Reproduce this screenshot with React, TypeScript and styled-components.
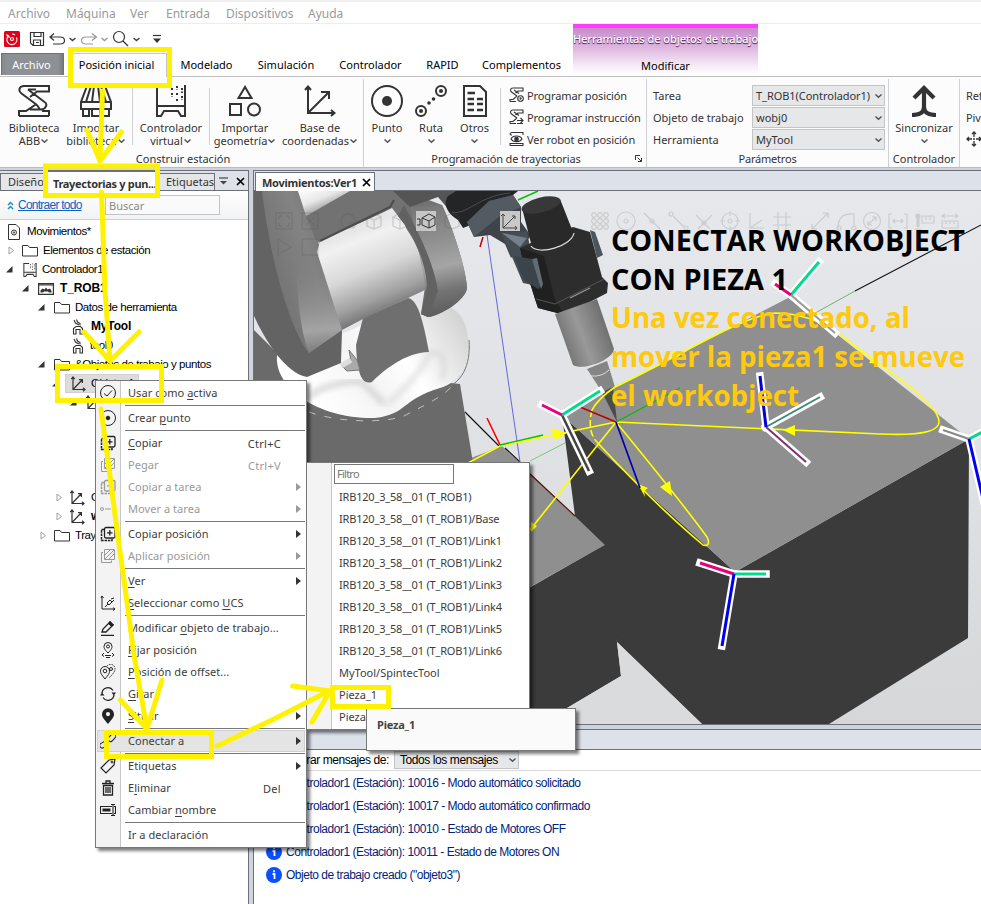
import React from "react";
import styled, { createGlobalStyle, css } from "styled-components";

const UI = `"Noto Sans", "Open Sans", sans-serif`;
const TREE = `"Liberation Sans", Arial, sans-serif`;
const INK = "#333";
const MARK = "#fff200";

const Global = createGlobalStyle`
  *, *::before, *::after { box-sizing: border-box; }
  body { margin: 0; background: #fff; }
  svg { display: block; flex: none; }
`;

/* ---------- window shell ---------- */

const Window = styled.div`
  position: relative;
  display: flex;
  flex-direction: column;
  width: 981px;
  height: 904px;
  overflow: hidden;
  background: #fff;
  color: ${INK};
  font: 11px/13px ${UI};
  white-space: nowrap;
`;

const HostMenu = styled.nav`
  display: flex;
  gap: 16px;
  height: 24px;
  padding: 4px 8px 0;
  border-top: 2px solid #f0f0f0;
  border-bottom: 1px solid #ededed;
  color: #999;
  font-size: 12px;
  line-height: 15px;
`;

const HostItem = styled.span<{ $w: number }>`
  width: ${(p) => p.$w}px;
`;

const TitleArea = styled.header`
  display: grid;
  grid-template-columns: 573px 185px 1fr;
  height: 53px;
  border-bottom: 1px solid #bfbfbf;
`;

const TitleLeft = styled.div`
  display: flex;
  flex-direction: column;
`;

const QuickBar = styled.div`
  display: flex;
  align-items: center;
  height: 29px;
  padding-left: 4px;
`;

const TabRow = styled.div`
  display: flex;
  height: 23px;
  padding-left: 1px;
`;

const Tab = styled.div<{ $kind?: "file" | "active"; $w: number }>`
  width: ${(p) => p.$w}px;
  height: 24px;
  padding-top: 5px;
  text-align: center;
  color: #000;
  ${(p) =>
    p.$kind === "file" &&
    css`
      height: 22px;
      margin-right: 4px;
      padding: 4px 2px 0 0;
      color: #fff;
      background: linear-gradient(90deg, #85888c, #8d9094 8%, #8d9094 92%, #75787c);
      border: 1px solid #6f7276;
      border-bottom: 0;
    `}
  ${(p) =>
    p.$kind === "active" &&
    css`
      padding: 4px 2px 0 0;
      background: #fcfcfc;
      border: 1px solid #c8c8c8;
      border-bottom: 0;
    `}
`;

const ContextTab = styled.div`
  display: flex;
  flex-direction: column;
  align-items: center;
  height: 51px;
  padding-top: 4px;
  border-top: 4px solid #ff3cff;
  background: linear-gradient(#c88bcb, #dcb4de 40%, #f5e8f5 78%, #fff);
  overflow: hidden;
`;

const ContextTitle = styled.div`
  color: #fff;
  font-size: 11px;
  font-weight: 500;
  letter-spacing: -0.05px;
  text-shadow: 0 1px 1px #6a2c70, 0 1px 0 #8a4c90;
`;

const ContextName = styled.div`
  margin-top: 14px;
  color: #000;
`;

/* ---------- ribbon ---------- */

const Ribbon = styled.section`
  display: flex;
  height: 91px;
  padding-top: 2px;
  background: #fcfcfc;
  border-bottom: 1px solid #b9bcc1;
`;

const Group = styled.div<{ $w: number }>`
  display: flex;
  flex-direction: column;
  flex: none;
  width: ${(p) => p.$w}px;
  border-right: 1px solid #cfd1d4;
`;

const GroupBody = styled.div`
  display: flex;
  height: 73px;
  padding-top: 6px;
`;

const GroupName = styled.div<{ $shift?: number; $ls?: number }>`
  position: relative;
  padding-left: ${(p) => p.$shift ?? 0}px;
  text-align: center;
  line-height: 14px;
  letter-spacing: ${(p) => p.$ls ?? 0}px;
`;

const Launcher = styled.span`
  position: absolute;
  right: 4px;
  top: 3px;
`;

const BigButton = styled.div<{ $w: number }>`
  display: flex;
  flex-direction: column;
  align-items: center;
  flex: none;
  width: ${(p) => p.$w}px;
  text-align: center;
`;

const BigLabel = styled.div`
  display: flex;
  align-items: center;
  height: 13px;
  &:first-of-type { margin-top: 4px; }
`;

const Divider = styled.i<{ $l: number; $r: number }>`
  flex: none;
  width: 1px;
  height: 57px;
  margin: 3px ${(p) => p.$r}px 0 ${(p) => p.$l}px;
  background: #cfd1d4;
`;

const RowStack = styled.div<{ $pad: number }>`
  display: flex;
  flex-direction: column;
  padding-left: ${(p) => p.$pad}px;
`;

const SmallButton = styled.div`
  display: flex;
  align-items: center;
  gap: 3px;
  height: 22px;
  padding-bottom: 2px;
  letter-spacing: -0.1px;
`;

const Param = styled.label`
  display: grid;
  grid-template-columns: 99px 133px;
  align-items: center;
  height: 22px;
  padding-bottom: 1px;
`;

const Combo = styled.span<{ $w?: number; $ls?: number }>`
  display: flex;
  align-items: center;
  justify-content: space-between;
  width: ${(p) => p.$w ?? 133}px;
  height: 21px;
  padding: 0 1px 0 3px;
  border: 1px solid #c3c4c6;
  background: #e6e7e9;
  letter-spacing: ${(p) => p.$ls ?? 0}px;
`;

/* ---------- dock area ---------- */

const Dock = styled.main`
  display: flex;
  flex: 1;
  min-height: 0;
  padding-top: 2px;
  background: #cfd4dd;
`;

const SidePanel = styled.aside`
  display: flex;
  flex-direction: column;
  width: 249px;
  border-top: 1px solid #6c7079;
  border-right: 1px solid #6c7079;
  background: #fff;
`;

const Strip = styled.div`
  display: flex;
  align-items: flex-end;
  height: 20px;
  background: #dde1e9;
  border-bottom: 1px solid #6c7079;
`;

const DockTab = styled.div<{ $w: number; $on?: boolean }>`
  width: ${(p) => p.$w}px;
  height: 17px;
  padding: 1px 0 0 7px;
  overflow: hidden;
  border: 1px solid #6c7079;
  border-width: 1px 1px 0;
  background: #e4e6ea;
  ${(p) =>
    p.$on &&
    css`
      height: 20px;
      margin-bottom: -1px;
      padding-top: 5px;
      background: #fff;
      font-weight: bold;
      letter-spacing: -0.32px;
    `}
`;

const StripTools = styled.div`
  display: flex;
  align-items: center;
  gap: 8px;
  height: 18px;
  padding-left: 4px;
`;

const TreeTools = styled.div`
  display: flex;
  align-items: center;
  height: 29px;
  padding-left: 7px;
  background: linear-gradient(#fff, #f1f2f3);
  border-bottom: 1px solid #cfcfcf;
  font: 12px/14px ${TREE};
`;

const CollapseLink = styled.a`
  width: 64px;
  margin: 0 23px 0 4px;
  color: #0b62c4;
  text-decoration: underline;
  letter-spacing: -0.75px;
`;

const Search = styled.div`
  width: 115px;
  height: 20px;
  padding: 3px 3px;
  border: 1px solid #c2c3c5;
  background: #fafafa;
  color: #888;
  font: 11px/13px ${UI};
`;

const Tree = styled.div`
  padding-top: 2px;
  font: 11.5px/19px ${TREE};
  letter-spacing: -0.44px;
  color: #000;
`;

const TreeRow = styled.div<{ $indent: number; $bold?: boolean; $gap?: number }>`
  display: flex;
  align-items: center;
  height: 19px;
  padding-left: ${(p) => p.$indent}px;
  margin-top: ${(p) => p.$gap ?? 0}px;
  ${(p) =>
    p.$bold &&
    css`
      font-weight: bold;
      font-size: 12px;
      letter-spacing: -0.15px;
    `}
`;

const Caret = styled.span`
  width: 8px;
`;

const Glyph = styled.span<{ $ml: number; $mr: number }>`
  margin: 0 ${(p) => p.$mr}px 0 ${(p) => p.$ml}px;
`;

const Picked = styled.span`
  display: flex;
  align-items: center;
  width: 74px;
  height: 19px;
  margin-left: 5px;
  padding-left: 4px;
  gap: 5px;
  background: #dcdcdc;
  border: 1px solid #d0d0d0;
`;

const Center = styled.div`
  display: flex;
  flex-direction: column;
  width: 728px;
  margin-left: 4px;
  border-top: 1px solid #6c7079;
  border-left: 1px solid #6c7079;
  background: #fff;
`;

const ViewTab = styled.div`
  display: flex;
  align-items: center;
  gap: 5px;
  width: 120px;
  height: 19px;
  margin: 0 0 -1px 1px;
  padding-left: 6px;
  border: 1px solid #6c7079;
  border-bottom: 0;
  background: #fdfdfd;
  font-weight: bold;
  letter-spacing: -0.27px;
  color: #333;
`;

const Viewport = styled.div`
  position: relative;
  height: 533px;
  overflow: hidden;
`;

const OutputHead = styled.div`
  height: 26px;
  border-top: 1px solid #6c7079;
  border-bottom: 1px solid #6c7079;
  background: linear-gradient(#cdd3dc 4px, #6c7079 4px, #6c7079 5px, #dce1ea 5px);
`;

const OutputFilter = styled.div`
  display: flex;
  align-items: center;
  height: 21px;
  padding-left: 28px;
  gap: 5px;
  border-bottom: 1px solid #dcdcdc;
  color: #000;
  font: 12px/14px ${TREE};
  letter-spacing: -0.42px;
`;

const FilterCombo = styled(Combo)`
  width: 125px;
  height: 18px;
  padding-left: 5px;
  letter-spacing: -0.42px;
`;

const LogRow = styled.div`
  display: flex;
  align-items: center;
  gap: 4px;
  height: 23px;
  padding-left: 12px;
  color: #00247a;
  font: 12px/14px ${TREE};
  letter-spacing: -0.48px;
`;

/* ---------- floating menus ---------- */

const Popup = styled.div<{ $x: number; $y: number; $w: number; $h: number }>`
  position: absolute;
  left: ${(p) => p.$x}px;
  top: ${(p) => p.$y}px;
  width: ${(p) => p.$w}px;
  height: ${(p) => p.$h}px;
  padding: 1px;
  border: 1px solid #77787a;
  background: linear-gradient(90deg, #f3f3f3 24px, #c6c6c6 24px, #c6c6c6 25px, #fff 25px);
  box-shadow: 3px 3px 3px rgba(0, 0, 0, 0.5);
  letter-spacing: 0.05px;
`;

const MenuRow = styled.div<{ $off?: boolean; $hot?: boolean }>`
  display: grid;
  grid-template-columns: 31px 1fr 36px 15px 8px;
  align-items: center;
  height: 22px;
  padding-right: 1px;
  color: ${(p) => (p.$off ? "#999" : "#3c3c3c")};
  ${(p) =>
    p.$hot &&
    css`
      background: #e4e4e4;
      box-shadow: inset 0 0 0 1px #cfcfcf;
    `}
  u { text-underline-offset: 2px; }
`;

const MenuIcon = styled.span`
  padding-left: 3px;
`;

const MenuText = styled.span`
  padding-bottom: 2px;
`;

const Shortcut = styled.span`
  text-align: right;
  letter-spacing: 0.3px;
`;

const Rule = styled.div`
  height: 1px;
  margin: 1px 0 1px 28px;
  background: #77787a;
`;

const Filter = styled.div`
  width: 120px;
  height: 20px;
  margin: 0 0 2px 26px;
  padding: 2px 2px;
  border: 1px solid #77787a;
  background: #fff;
  color: #777;
  letter-spacing: -0.75px;
`;

const SubRow = styled.div<{ $tight: boolean }>`
  height: 22px;
  padding: 4px 0 0 31px;
  color: #3c3c3c;
  letter-spacing: ${(p) => (p.$tight ? -0.19 : 0)}px;
`;

const Tip = styled.div`
  position: absolute;
  left: 366px;
  top: 708px;
  width: 210px;
  height: 43px;
  padding: 9px 10px;
  border: 1px solid #77787a;
  background: #fafafa;
  box-shadow: 3px 3px 3px rgba(0, 0, 0, 0.5);
  font-weight: bold;
  letter-spacing: -0.2px;
  color: #444;
`;

const Marks = styled.svg`
  position: absolute;
  left: 0;
  top: 0;
  pointer-events: none;
`;

/* ---------- icons ---------- */

type IconProps = { w: number; h?: number; vb?: string; c?: string; sw?: number; children: React.ReactNode };
const Icon = ({ w, h = w, vb, c = "#333", sw = 1, children }: IconProps) => (
  <svg width={w} height={h} viewBox={vb ?? `0 0 ${w} ${h}`} fill="none" stroke={c} strokeWidth={sw}>
    {children}
  </svg>
);

const Chevron = ({ c = "#555" }: { c?: string }) => (
  <Icon w={9} h={6} c={c} sw={1.5}><path d="M1.5 1.5 4.5 4.3 7.5 1.5" /></Icon>
);
const Cross = () => <Icon w={9} c="#000" sw={1.7}><path d="M1 1 8 8M8 1 1 8" /></Icon>;
const Menu3 = () => (
  <Icon w={9} h={8} c="#444" sw={1.2}><path d="M0 1H9" /><path d="M1 4H8L4.500 7.500Z" fill="#444" stroke="none" /></Icon>
);
const Axes = ({ s = 16 }: { s?: number }) => (
  <Icon w={s} vb="0 0 16 16" sw={1.2}>
    <path d="M3 1V13.5H15M3 13.5 12 4M1.3 3.2 3 1 4.7 3.2M13 11.8 15 13.5 13 15.2M9 3.6H12.4V7" />
  </Icon>
);
const Folder = () => <Icon w={16} h={13}><path d="M.5 12V1.5H6L7.5 3.5H15.5V12Z" /></Icon>;
const Open = () => <Icon w={7} c="none"><path d="M6.5 0V6.5H0Z" fill="#333" /></Icon>;
const Closed = () => <Icon w={7} h={9} c="#a0a0a0"><path d="M1 1 5.5 4.5 1 8Z" /></Icon>;
const Gripper = () => (
  <Icon w={12} h={16} sw={1.1}>
    <path d="M2 1 3.500 4 7 6M4.500.500 5.500 3 8 4.500V6.500M1.500 15V9.500L4 7.500H8.500L10.500 9.500V15H8V10.500H4V15Z" />
  </Icon>
);
const Cabinet = ({ s }: { s: number }) => (
  <Icon w={s} vb="0 0 32 32" sw={s > 20 ? 2 : 2.3}>
    <path d="M2 0V31H6L9 26H23L26 31H30V0M2 21H30" />
    <path d="M17 3V6M17 8V12M22 1V5M22 8V11M22 14V17M27 3V8M27 11V15" strokeDasharray="2 1.5" />
    {s < 20 && <path d="M2 1H14M28 1H30" />}
  </Icon>
);
const ArmIcon = () => (
  <Icon w={32} sw={2}>
    <path d="M6 1H31V6.500H19L12 12M6 1C1 1 0 6 3.500 8.500L19 20M10 4.500 26.500 17C30 19 28 25 22 24.500M19 20 22 24.500M1 31V26H8L18.500 19M31 31V26H24M1 31H31M10 4.500H18M12 24.500H22" />
  </Icon>
);
const LibraryIcon = () => (
  <Icon w={32} sw={2}>
    <path d="M7 1H25L31 17H1ZM11 1 6 17M14 1 12 17M18 1 20 17M21 1 26 17M1 17V24H31V17M3 24V31H9V25M11 31H21M12 25V31M20 25V31M23 25V31H29V24" />
  </Icon>
);
const ShapesIcon = () => (
  <Icon w={32} sw={2}><path d="M16 2 22.5 13H9.5ZM1 19H12V30H1Z" /><circle cx="25" cy="24.500" r="6" /></Icon>
);
const FrameIcon = () => (
  <Icon w={32} sw={2}><path d="M4 3V28H29M4 28 24 8M1 5 4 1.500 7 5M27 25 30.500 28 27 31M17 7H25V14" /></Icon>
);
const TargetIcon = () => (
  <Icon w={32} sw={2}><circle cx="16" cy="16" r="15" /><circle cx="16" cy="16" r="5" fill="#333" stroke="none" /></Icon>
);
const RouteIcon = () => (
  <Icon w={32} sw={2}>
    <circle cx="26" cy="6" r="5" /><circle cx="6" cy="26" r="5" />
    <g fill="#333" stroke="none">
      <circle cx="26" cy="6" r="2" /><circle cx="6" cy="26" r="2" />
      <circle cx="14" cy="18" r="1.800" /><circle cx="18.500" cy="14" r="1.800" />
    </g>
  </Icon>
);
const SheetIcon = () => (
  <Icon w={24} h={32} sw={2}>
    <path d="M1 1H17L23 7V31H1Z" />
    <path d="M4.500 8H12M4.500 14H11M4.500 19H11M4.500 25H11M14 14H20M14 19H20M14 25H20" strokeWidth="2.600" />
  </Icon>
);
const SyncIcon = () => (
  <Icon w={26} h={32} sw={4.200}>
    <path d="M13 2.500V22C13 28 8 30 1 30M13 22C13 28 18 30 25 30" />
    <path d="M3 13 13 3 23 13" />
  </Icon>
);
const MiniArm = ({ kind }: { kind: 0 | 1 | 2 }) => (
  <Icon w={15} h={16} sw={1.100}>
    {kind === 2 ? (
      <>
        <path d="M3 4C0 4 1 1.500 3 1.500H14V4M1 14.500V12.500H14V14.500H1M2 8C4 4 11 4 13 8 11 11.500 4 11.500 2 8Z" />
        <circle cx="7.500" cy="8" r="1.800" fill="#333" />
      </>
    ) : (
      <path d="M4 1H14V4H9L6.500 6M4 1C1 1 1 4 2.500 5L8 9M5 3 10 6.500M1 14.500V12.500H4L8 9M1 14.500H7" />
    )}
    {kind === 0 && <><circle cx="11.500" cy="11.500" r="2.800" /><circle cx="11.500" cy="11.500" r=".6" /></>}
    {kind === 1 && <path d="M8 11.500H14M11.500 9 14 11.500 11.500 14M8 14.500H14" />}
  </Icon>
);

const copyGlyph = (
  <>
    <rect x="4.500" y="1.500" width="10.500" height="10.500" rx="1.500" strokeWidth="1.300" />
    <path d="M9.800 4V9.500M7 6.800H12.500" strokeWidth="1.300" />
    <path d="M4 3.500H1.500V14.500H12V12" strokeWidth="1.500" strokeDasharray="2.500 .8" />
  </>
);

const menuIcons: Record<string, React.ReactNode> = {
  check: <><circle cx="8" cy="8" r="7.500" /><path d="M4 8.500 7 11 12 5.500" /></>,
  point: <><circle cx="8" cy="8" r="7.500" /><circle cx="8" cy="8" r="1.800" fill="#222" /></>,
  copy: copyGlyph,
  paste: <><path d="M4.500 1.500H14.500V11.500H4.500ZM3 4.500H1.500V14.500H11.500V12.500M5 7 10 2M5 11 14 2M9 11 14 6" /></>,
  move: <><circle cx="2" cy="8" r="1.500" /><path d="M5 8H11" /></>,
  ucs: <path d="M2 1V14H15M1 3 2 1 3.500 3M13 12.500 15 14 13 15.500M5 12 8 9M7 8 9 10 12 7 10 5ZM11 4 14 3M12 7 14 5" />,
  edit: <><path d="M1 15.500H14" strokeWidth="1.500" /><path d="M2 12 3 9 10 2 13 5 6 12Z" strokeWidth="1.300" /><path d="M10 1.500 13.500 5 11.500 6.500 8.500 3.500Z" fill="#222" /></>,
  pin: <><path d="M8 11C4 7 4 5.500 4 4.500A4 4 0 0 1 12 4.500C12 5.500 12 7 8 11ZM4 11 2 13 4 14.500M12 11 14 13 12 14.500M5 13.500H11M6 15.500H10" /><circle cx="8" cy="4.500" r="1.500" /></>,
  offset: <><path d="M5 15C1 10 .5 9 .5 7A4.500 4.500 0 0 1 9.500 7C9.500 9 9 10 5 15Z" /><circle cx="5" cy="7" r="1.800" /><path d="M7 2A4.500 4.500 0 0 1 15 5C15 8 12 11 9 14" strokeDasharray="1.500 1" /><circle cx="11" cy="5" r="1.500" /></>,
  rotate: <><path d="M2 7A6 6 0 0 1 13 4.500M14 9A6 6 0 0 1 3 11.500" strokeWidth="1.300" /><path d="M11.500 6.500H16L13.800 9.500ZM0 9.500 2 6.500 4.500 9.500Z" fill="#222" stroke="none" /></>,
  place: <path fillRule="evenodd" d="M8 16C3 10 2 8.500 2 6.200A6 6 0 0 1 14 6.200C14 8.500 13 10 8 16ZM8 4A2 2 0 1 0 8 8.200 2 2 0 1 0 8 4Z" fill="#222" stroke="none" />,
  link: <><rect x="7.500" y="2" width="9" height="5" rx="2.500" transform="rotate(-48 12 4.500)" /><rect x="-.5" y="9" width="9" height="5" rx="2.500" transform="rotate(-30 4 11.500)" /></>,
  tag: <><path d="M1 10 9 2 15 1 14 7 6 15Z" strokeWidth="1.200" /><circle cx="12" cy="4" r="1" /></>,
  trash: <path d="M2 3.500H14M6 3V1H10V3M3.500 5.500V15H12.500V5.500ZM6 7V13M8 7V13M10 7V13" strokeWidth="1.300" />,
  rename: <><path d="M12 4.500H.5V11.500H12M13 3V13M11 2.500H12.500L13 3 13.500 2.500H15M11 13.500H12.500L13 13 13.500 13.500H15M14 4.500H15.500V11.500H14" strokeWidth="1.100" /><path d="M2.500 8H10.500" strokeWidth="3" /></>,
};

/* ---------- data ---------- */

type Entry = { t?: React.ReactNode; i?: string; off?: boolean; sub?: boolean; key?: string; hot?: boolean };
const menu: Entry[] = [
  { t: <>Usar como <u>a</u>ctiva</>, i: "check" }, {},
  { t: <>Crear <u>p</u>unto</>, i: "point" }, {},
  { t: <><u>C</u>opiar</>, i: "copy", key: "Ctrl+C" },
  { t: "Pegar", i: "paste", key: "Ctrl+V", off: true },
  { t: "Copiar a tarea", i: "copy", sub: true, off: true },
  { t: "Mover a tarea", i: "move", sub: true, off: true }, {},
  { t: "Copiar posición", i: "copy", sub: true },
  { t: "Aplicar posición", i: "paste", sub: true, off: true }, {},
  { t: <><u>V</u>er</>, sub: true },
  { t: <><u>S</u>eleccionar como <u>U</u>CS</>, i: "ucs" }, {},
  { t: <>Modificar <u>o</u>bjeto de trabajo...</>, i: "edit" },
  { t: <><u>F</u>ijar posición</>, i: "pin" },
  { t: <><u>P</u>osición de offset...</>, i: "offset" },
  { t: <><u>G</u>irar</>, i: "rotate" },
  { t: <><u>S</u>ituar</>, i: "place", sub: true }, {},
  { t: "Conectar a", i: "link", sub: true, hot: true }, {},
  { t: "Etiquetas", i: "tag", sub: true },
  { t: <>E<u>l</u>iminar</>, i: "trash", key: "Del" },
  { t: <>Cambiar <u>n</u>ombre</>, i: "rename" }, {},
  { t: "Ir a declaración" },
];

const targets = [
  "IRB120_3_58__01 (T_ROB1)",
  "IRB120_3_58__01 (T_ROB1)/Base",
  ...[1, 2, 3, 4, 5, 6].map((n) => `IRB120_3_58__01 (T_ROB1)/Link${n}`),
  "MyTool/SpintecTool",
  "Pieza_1",
  "Pieza_2",
];

const log = [
  "Controlador1 (Estación): 10016 - Modo automático solicitado",
  "Controlador1 (Estación): 10017 - Modo automático confirmado",
  "Controlador1 (Estación): 10010 - Estado de Motores OFF",
  "Controlador1 (Estación): 10011 - Estado de Motores ON",
  'Objeto de trabajo creado ("objeto3")',
];

/* ---------- 3D scene ---------- */

type Axis = { to: [number, number]; c: string; w?: number };
const Triad = ({ at, axes }: { at: [number, number]; axes: Axis[] }) => (
  <g fill="none">
    {axes.map((a, i) => (
      <path key={i} d={`M${at}L${a.to}`} stroke="#fff" strokeWidth="7.500" strokeLinecap="square" />
    ))}
    {axes.map((a, i) => (
      <path key={i} d={`M${at}L${a.to}`} stroke={a.c} strokeWidth={a.w ?? 3} />
    ))}
  </g>
);

const Ghost = ({ x, y = 221, children }: { x: number; y?: number; children: React.ReactNode }) => (
  <g transform={`translate(${x} ${y})`}>{children}</g>
);

const Scene = () => (
  <svg width="727" height="533" viewBox="254 191 727 533">
    <defs>
      <linearGradient id="sky" x1="0" y1="0" x2="0" y2="1">
        <stop offset="0" stopColor="#e7e8eb" /><stop offset=".5" stopColor="#dfe1e4" /><stop offset="1" stopColor="#d6d7d9" />
      </linearGradient>
      <linearGradient id="link" gradientUnits="userSpaceOnUse" x1="256" y1="290" x2="345" y2="262">
        <stop offset="0" stopColor="#666" /><stop offset=".3" stopColor="#777" /><stop offset=".65" stopColor="#838383" /><stop offset="1" stopColor="#757575" />
      </linearGradient>
      <linearGradient id="linkLow" gradientUnits="userSpaceOnUse" x1="312" y1="250" x2="322" y2="350">
        <stop offset="0" stopColor="#777" stopOpacity="0" /><stop offset=".8" stopColor="#a4a4a4" /><stop offset="1" stopColor="#808080" />
      </linearGradient>
      <linearGradient id="drum" gradientUnits="userSpaceOnUse" x1="352" y1="225" x2="388" y2="315">
        <stop offset="0" stopColor="#e2e2e2" /><stop offset=".18" stopColor="#f1f1f1" /><stop offset=".5" stopColor="#d8d8d8" /><stop offset=".8" stopColor="#a0a0a0" /><stop offset="1" stopColor="#6c6c6c" />
      </linearGradient>
      <linearGradient id="elbow" gradientUnits="userSpaceOnUse" x1="430" y1="200" x2="452" y2="310">
        <stop offset="0" stopColor="#747474" /><stop offset=".35" stopColor="#8f8f8f" /><stop offset=".6" stopColor="#a5a5a5" /><stop offset=".82" stopColor="#737373" /><stop offset="1" stopColor="#606060" />
      </linearGradient>
      <linearGradient id="cap" gradientUnits="userSpaceOnUse" x1="320" y1="410" x2="460" y2="320">
        <stop offset="0" stopColor="#fff" /><stop offset=".35" stopColor="#f4f4f4" /><stop offset=".6" stopColor="#fff" /><stop offset="1" stopColor="#d4d4d4" />
      </linearGradient>
      <linearGradient id="white" gradientUnits="userSpaceOnUse" x1="310" y1="185" x2="322" y2="215">
        <stop offset="0" stopColor="#fff" /><stop offset=".5" stopColor="#e8e8e8" /><stop offset="1" stopColor="#888" />
      </linearGradient>
      <linearGradient id="pen" gradientUnits="userSpaceOnUse" x1="565" y1="345" x2="610" y2="328">
        <stop offset="0" stopColor="#777" /><stop offset=".4" stopColor="#999" /><stop offset="1" stopColor="#6c6c6c" />
      </linearGradient>
      <filter id="soft"><feGaussianBlur stdDeviation="3" /></filter>
    </defs>
    <rect x="254" y="191" width="727" height="533" fill="url(#sky)" />

    {/* workpieces */}
    <path d="M562 415 735 572 969 439 968 638 829 724H702L617 642 575 516Z" fill="#3b3b3b" />
    <path d="M604 545 617 642 621 676 540 724H400V662Z" fill="#3b3b3b" />
    <path d="M621 676 617 642 702 724H540Z" fill="#dadbdd" />
    <path d="M502 446 605 545 530 587 440 640V470Z" fill="#8f8f8f" />
    <path d="M790 297 969 439 735 572 562 415Z" fill="#8f8f8f" />
    <path d="M465 412 500 447M505 448 520 462" stroke="#111" strokeWidth="1.200" />
    <path d="M530 474 575 516" stroke="#5a1010" strokeWidth="1.200" />

    {/* robot arm */}
    <path d="M254 330 290 366 460 384 473 463H254Z" fill="#6a6a6a" />
    <path d="M277 355C274 388 318 419 375 418 408 414 400 400 440 388 462 382 471 358 468 340 467 322 460 312 450 307L420 300 300 352Z" fill="url(#cap)" />
    <path d="M308 398C320 385 352 380 362 382L384 404" stroke="#c6c6c6" strokeWidth="4" fill="none" filter="url(#soft)" />
    <path d="M388 404C400 392 420 376 430 352 440 350 448 360 442 380" stroke="#cfcfcf" strokeWidth="3" fill="none" filter="url(#soft)" />
    <path d="M309 412C340 423 385 423 404 416 430 402 455 393 463 368" stroke="#d5d5d5" strokeDasharray="7 9" fill="none" strokeWidth=".8" />
    <path d="M469 340C471 365 462 385 440 390" stroke="#777" fill="none" />
    <path d="M363 318 408 298C418 300 423 320 429 352 405 352 382 372 372 382 360 386 357 368 356 345Z" fill="#6f6f6f" />
    <path d="M254 191H298L320 248 342 330 341 363 307 377C286 374 265 340 254 316Z" fill="#636363" />
    <path d="M262 191H298L320 248 342 330 309 353C290 330 270 260 262 191Z" fill="url(#link)" />
    <path d="M300 250 320 248 342 330 309 353C300 330 298 300 296 270Z" fill="url(#linkLow)" />
    <path d="M298 191H352L306 216Z" fill="url(#white)" />
    <path d="M306 216 350 191H405L442 205C452 226 466 268 467 288 466 300 440 316 428 317L421 314 426 280 405 225 392 208 320 244 315 238Z" fill="#727272" />
    <path d="M320 241 380 214C398 211 414 236 421 258 427 275 428 283 427 289L408 298 363 319 342 330 317 252Z" fill="url(#drum)" />
    <path d="M410 207 442 205C452 226 466 268 467 288 466 300 440 316 428 317L421 314 429 303Z" fill="url(#elbow)" />
    <path d="M404 205C420 235 434 264 438 291L428 317 421 314 427 285C425 258 412 232 398 216Z" fill="#626262" />
    <path d="M320 241 390 207 394 200" stroke="#4c4c4c" strokeWidth="2" fill="none" />
    <path d="M349 350 357 360 360 370 347 371 341 365 351 361Z" fill="#aaa" stroke="#777" />
    <path d="M341 366 351 360" stroke="#ddd" strokeWidth="5" />
    <path d="M473 191H393L410 207 438 197 450 211 475 200Z" fill="#555" />

    {/* base and world lines */}
    <path d="M487 235 520 462" stroke="#6666e0" fill="none" />
    <path d="M518 200 538 191" stroke="#00c400" strokeWidth="1.500" />
    <path d="M483 237 480 247" stroke="#b00" strokeWidth="1.500" />

    {/* wrist */}
    <path d="M456 191H518L503 203 478 222 463 228 458 220C446 213 443 203 448 196Z" fill="#242526" />
    <path d="M452 212C466 216 478 196 510 193" stroke="#4a4c4e" fill="none" />
    <path d="M467 222 489 201 513 195 521 207 521 222 531 236 511 258 505 244 490 235 474 237Z" fill="#3e444a" />
    <path d="M467 222 489 201 513 195 521 207 500 216 474 237Z" fill="#535a61" />
    <path d="M501 233 527 231 531 253 542 287 523 283 512 257Z" fill="#454d54" />
    <path d="M502 233 527 238 520 247Z" fill="#76808a" />
    <path d="M590 230 595 232 603 255 597 258Z" fill="#4c555d" />

    {/* tool */}
    <path d="M520 248 533 242 573 227 590 232 602 277 608 283 607 293 565 315 538 308 535 299Z" fill="#2d2d2d" />
    <path d="M520 248 544 256 555 300 565 315 538 308 535 299 523 262Z" fill="#202020" />
    <path d="M514 256 532 259 542 285 538 289 524 280Z" fill="#3c444b" />
    <path d="M532 259 537 258 543 284 541 289Z" fill="#626c75" />
    <path d="M522 208 560 199 573 232C568 246 541 252 532 247Z" fill="#292929" />
    <ellipse cx="541" cy="205" rx="20" ry="7.500" transform="rotate(-14 541 205)" fill="#383838" />
    <path d="M531 246C538 256 572 246 574 233" stroke="#ddd" strokeWidth="1.200" fill="none" />
    <path d="M536 299 555 304 604 279" stroke="#555" strokeWidth="1" fill="none" />
    <path d="M570 298 590 288" stroke="#999" strokeWidth="1.200" fill="none" />
    <path d="M555 314 597 299 614 349C612 361 582 371 573 365Z" fill="url(#pen)" />
    <path d="M587 369 607 361 615 387 602 392Z" fill="#858585" />
    <path d="M591 376Q602 377 609 370" stroke="#ddd" fill="none" />
    <path d="M602 392 613 387 617 422Z" fill="#4b4b4b" />

    {/* trajectories */}
    <g fill="none" stroke="#ff0" strokeWidth="1.600">
      <path d="M468 463 500 446 616 422 880 434C925 436 946 431 937 415 927 395 875 362 847 340 825 318 790 313 775 313 740 317 690 351 615 387 602 396 596 402 592 410" />
      <path d="M592 410Q587 430 596 441" strokeDasharray="7 3" />
      <path d="M596 441C620 467 665 513 703 545 710 547 709 541 707 537Q680 500 616 422L530 530" />
    </g>
    <g fill="#ff0">
      <path d="M567 433 551 428 555 440ZM783 430 795 425V436ZM672 496 660 487 670 481ZM638 484 648 488 644 491 645 497ZM687 351 671 352 676 358ZM869 363 876 352 879 364ZM531 532V522L537 526Z" />
    </g>
    <path d="M487 418 500 445" stroke="#f00" strokeWidth="1.600" />
    <path d="M500 445 543 435M616 422 680 388" stroke="#00c000" strokeWidth="1.400" />
    <path d="M530 461 565 443" stroke="#7c7" />
    <path d="M580 407 616 422" stroke="#c00000" strokeWidth="1.500" />
    <path d="M616 422 640 488" stroke="#0000b0" strokeWidth="1.700" />
    <path d="M855 291 981 225" stroke="#111" strokeWidth="1.100" />
    <path d="M817 312 855 291" stroke="#6fb36f" />
    <Triad at={[562, 415]} axes={[{ to: [589, 471], c: "#444" , w: 2.5 }, { to: [600, 391], c: "#00dc8c" }, { to: [542, 405], c: "#e6007e" }]} />
    <Triad at={[791, 295]} axes={[{ to: [835, 333], c: "#999", w: 2 }, { to: [819, 262], c: "#00dc8c" }, { to: [775, 284], c: "#e6007e" }]} />
    <Triad at={[766, 427]} axes={[{ to: [820, 397], c: "#3a8a78", w: 2 }, { to: [806, 462], c: "#803070", w: 2 }, { to: [760, 376], c: "#0000d0" }]} />
    <Triad at={[734, 574]} axes={[{ to: [700, 563], c: "#e6007e" }, { to: [766, 574], c: "#00dc8c" }, { to: [722, 646], c: "#0000f0" }]} />
    <Triad at={[969, 439]} axes={[{ to: [943, 430], c: "#888", w: 2 }, { to: [990, 428], c: "#00dc8c" }, { to: [984, 503], c: "#0000f0" }]} />

    {/* faded view toolbar */}
    <g fill="none" stroke="#555" strokeWidth="1.300" opacity=".22">
      <Ghost x={284}><path d="M-8-8H8V8H-8ZM-5-2V-5H-2M2-5H5V-2M5 2V5H2M-2 5H-5V2" /></Ghost>
      <Ghost x={310}><path d="M-8-8H8V8H-8ZM-4-4 4 4M4-4-4 4" /></Ghost>
      <Ghost x={348}><circle r="7" /><circle cx="4" cy="4" r="3" /></Ghost>
      <Ghost x={374}><path d="M-7-4 0-8 7-4V5L0 8-7 5ZM-7-4 0-1 7-4M0-1V8" /></Ghost>
      <Ghost x={400}><path d="M-7-4 0-8 7-4V5L0 8-7 5ZM-7-4 0-1 7-4M0-1V8" /></Ghost>
      <Ghost x={452}><path d="M-7-4 0-8 7-4V5L0 8-7 5Z" /></Ghost>
      <Ghost x={284} y={247}><path d="M-6-8 7 0-6 8Z" /></Ghost>
      <Ghost x={310} y={247}><path d="M-8-8H8V8H-8Z" /></Ghost>
    </g>
    <g fill="none" stroke="#777" strokeWidth="1.200" opacity=".24">
      <Ghost x={600}>{[-6, 0, 6].map((a) => [-6, 0, 6].map((b) => <circle key={`${a}${b}`} cx={a} cy={b} r="2.300" />))}</Ghost>
      <Ghost x={626}><circle r="9" /><circle r="2" /></Ghost>
      <Ghost x={652}><path d="M-8-8 8 8" /><circle r="2" /></Ghost>
      <Ghost x={678}><circle cx="-7" cy="-7" r="2" /><path d="M-5-5 6 6" /><circle cx="8" cy="7" r="2" /></Ghost>
      <Ghost x={704}><path d="M-8-6 0 2 8-6M0 2-6 8M0 2 6 8" /><circle r="2" cy="2" /></Ghost>
      <Ghost x={730}><circle r="8" /><circle r="2" /><path d="M0-10V-5M0 5V10M-10 0H-5M5 0H10" /></Ghost>
      <Ghost x={756}><path d="M-6-8V7H8M-6 7 6-1" /></Ghost>
      <Ghost x={782}><path d="M-4-9V9M4-9V9M-9-4H9M-9 4H9" /></Ghost>
      <Ghost x={820}><path d="M-8 8 8-8M-8 3V8H-3M3-8H8V-3" /></Ghost>
      <Ghost x={846}><path d="M-8 7C-8-4-2-8 8-7V6" /><circle cx="-7" cy="7" r="2" /><circle cx="8" cy="7" r="2" /></Ghost>
      <Ghost x={872}><circle r="8.500" /><path d="M-4 4 4-4M0-4H4V0M-4 0V4H0" /></Ghost>
      <Ghost x={898}><path d="M-6-7H-9V7H-6M6-7H9V7H6M-5 0H5M-3-2-5 0-3 2M3-2 5 0 3 2" /></Ghost>
      <Ghost x={924}><path d="M-2-5H10V2H-2ZM2-5V-1M6-5V-1M-9 8H-3" /><circle cx="-6" cy="-5" r="2" fill="#777" /><path d="M-6-4V6" strokeWidth="3" /></Ghost>
      <Ghost x={950}><path d="M-8 0H8V7H-8ZM-4 0V3M0 0V3M4 0V3M-8-5H8M-5-7-8-5-5-3M5-7 8-5 5-3" /></Ghost>
    </g>
    <rect x="416" y="211" width="20" height="20" fill="#c6c6c6" />
    <path d="M422 218 429 214 435 217V225L429 228 422 225ZM422 218 429 221 435 217M429 221V228M417 219H420V225H417" stroke="#333" fill="none" />
    <rect x="500" y="211" width="20" height="20" fill="#c8c8c8" />
    <path d="M503 214V228H517M503 228 515 216M501 216 503 214 505 216M515 226 517 228 515 230M512 216H515V219" stroke="#444" fill="none" />
  </svg>
);

/* ---------- annotations ---------- */

const Annotations = () => (
  <Marks width="981" height="904" viewBox="0 0 981 904" fill="none">
    <g stroke={MARK} strokeWidth="5">
      <rect x="70.500" y="49.500" width="99" height="36" />
      <rect x="45.500" y="166" width="112" height="29.500" />
      <rect x="57.500" y="366.500" width="104" height="34" />
      <rect x="106.500" y="732.500" width="105" height="24" />
      <rect x="332.500" y="687.500" width="56" height="19" />
    </g>
    <g stroke={MARK} strokeWidth="5" strokeLinecap="round" strokeLinejoin="round">
      <path d="M102.500 91 100 161M87 130 100 161 121.500 132" />
      <path d="M101.500 192 105 290 110 361M84 332 110 361 139 332" />
      <path d="M101 409 109 468 117 530 127 602 134 655 147 729M120.500 700 147 729 162 680" />
      <path d="M217 746 270 721 329 691M292.500 686 330 691 312 722" />
    </g>
    <g fontFamily="Open Sans, Noto Sans, sans-serif" fontWeight="bold" fontSize="28.500">
      <g fill="#000">
        <text x="611" y="250.500" textLength="354" lengthAdjust="spacingAndGlyphs">CONECTAR WORKOBJECT</text>
        <text x="611" y="289.500" textLength="177" lengthAdjust="spacingAndGlyphs">CON PIEZA 1</text>
      </g>
      <g fill="#ffc90e">
        <text x="611" y="328" textLength="299" lengthAdjust="spacingAndGlyphs">Una vez conectado, al</text>
        <text x="611" y="367" textLength="354" lengthAdjust="spacingAndGlyphs">mover la pieza1 se mueve</text>
        <text x="611" y="406" textLength="188" lengthAdjust="spacingAndGlyphs">el workobject</text>
      </g>
    </g>
  </Marks>
);

const Big = ({ w, icon, a, b }: { w: number; icon: React.ReactNode; a: string; b?: string }) => (
  <BigButton $w={w}>
    {icon}
    <BigLabel>{a}</BigLabel>
    <BigLabel>{b}<Chevron /></BigLabel>
  </BigButton>
);

export default function App() {
  return (
    <Window>
      <Global />
      <HostMenu>
        <HostItem $w={42}>Archivo</HostItem>
        <HostItem $w={48}>Máquina</HostItem>
        <HostItem $w={20}>Ver</HostItem>
        <HostItem $w={44}>Entrada</HostItem>
        <HostItem $w={66}>Dispositivos</HostItem>
        <HostItem $w={36}>Ayuda</HostItem>
      </HostMenu>

      <TitleArea>
        <TitleLeft>
          <QuickBar>
            <svg width="158" height="20" viewBox="4 28 158 20" fill="none" stroke="#333" strokeWidth="1.200">
              <rect x="4" y="30" width="16" height="16" rx="1.500" fill="#e2001a" stroke="none" />
              <g stroke="#fff"><circle cx="12" cy="38" r="1.500" /><path d="M9 34.500A5 5 0 1 0 16.500 36.500M12 33A5 5 0 0 1 15 34M6.500 33.500 9.500 36.500" /></g>
              <path d="M30.500 31.500H43.500V44.500H33L30.500 42ZM34 32V35.500H41V32M33.500 44V39H40.500V44M36 41.500H39" />
              <path d="M54 32.500 50 36 54 39.500M50 36H60C66 36 66 43 60 43H53" />
              <path d="M92 32.500 96.500 36 92 39.500M96 36H86C80 36 80 43 86 43H93" stroke="#999" />
              <circle cx="119" cy="36" r="5.500" /><path d="M123 40 128 45" />
              <path d="M69.500 37 72.500 39.500 75.500 37M133.500 37 136.500 39.500 139.500 37" strokeWidth="1.500" stroke="#444" />
              <path d="M101.500 37 104.500 39.500 107.500 37" strokeWidth="1.500" stroke="#999" />
              <path d="M153 34.500H161" /><path d="M153 37.500H161L157 42Z" fill="#333" stroke="none" />
            </svg>
          </QuickBar>
          <TabRow>
            <Tab $kind="file" $w={63}>Archivo</Tab>
            <Tab $kind="active" $w={99}>Posición inicial</Tab>
            <Tab $w={79}>Modelado</Tab>
            <Tab $w={80}>Simulación</Tab>
            <Tab $w={89}>Controlador</Tab>
            <Tab $w={55}>RAPID</Tab>
            <Tab $w={103}>Complementos</Tab>
          </TabRow>
        </TitleLeft>
        <ContextTab>
          <ContextTitle>Herramientas de objetos de trabajo</ContextTitle>
          <ContextName>Modificar</ContextName>
        </ContextTab>
      </TitleArea>

      <Ribbon>
        <Group $w={364}>
          <GroupBody>
            <Big w={68} icon={<ArmIcon />} a="Biblioteca" b="ABB" />
            <Big w={56} icon={<LibraryIcon />} a="Importar" b="biblioteca" />
            <Divider $l={8} $r={4} />
            <Big w={68} icon={<Cabinet s={32} />} a="Controlador" b="virtual" />
            <Divider $l={4} $r={3} />
            <Big w={64} icon={<ShapesIcon />} a="Importar" b="geometría" />
            <Big w={86} icon={<FrameIcon />} a="Base de" b="coordenadas" />
          </GroupBody>
          <GroupName $shift={3}>Construir estación</GroupName>
        </Group>
        <Group $w={283}>
          <GroupBody>
            <Big w={46} icon={<TargetIcon />} a="Punto" />
            <Big w={42} icon={<RouteIcon />} a="Ruta" />
            <Big w={45} icon={<SheetIcon />} a="Otros" />
            <Divider $l={3} $r={3} />
            <RowStack $pad={5}>
              <SmallButton><MiniArm kind={0} />Programar posición</SmallButton>
              <SmallButton><MiniArm kind={1} />Programar instrucción</SmallButton>
              <SmallButton><MiniArm kind={2} />Ver robot en posición</SmallButton>
            </RowStack>
          </GroupBody>
          <GroupName $shift={2} $ls={-0.12}>
            Programación de trayectorias
            <Launcher><Icon w={7}><path d="M.5 5V.5H5M2.500 2.500 6 6M6.500 3V6.500H3" /></Icon></Launcher>
          </GroupName>
        </Group>
        <Group $w={242}>
          <GroupBody>
            <RowStack $pad={6}>
              <Param>Tarea<Combo $ls={-0.05}>T_ROB1(Controlador1)<Chevron /></Combo></Param>
              <Param>Objeto de trabajo<Combo>wobj0<Chevron /></Combo></Param>
              <Param>Herramienta<Combo>MyTool<Chevron /></Combo></Param>
            </RowStack>
          </GroupBody>
          <GroupName $ls={-0.2}>Parámetros</GroupName>
        </Group>
        <Group $w={71}>
          <GroupBody><Big w={70} icon={<SyncIcon />} a="Sincronizar" /></GroupBody>
          <GroupName>Controlador</GroupName>
        </Group>
        <RowStack $pad={6}>
          <GroupBody>
            <RowStack $pad={0}>
              <SmallButton>Referencia</SmallButton>
              <SmallButton>Pivote</SmallButton>
              <SmallButton>
                <Icon w={16} sw={1.300}><path d="M8 1V6M8 10V15M1 8H6M10 8H15M6 3 8 1 10 3M6 13 8 15 10 13M3 6 1 8 3 10M13 6 15 8 13 10M7 8H9" /></Icon>
              </SmallButton>
            </RowStack>
          </GroupBody>
        </RowStack>
      </Ribbon>

      <Dock>
        <SidePanel>
          <Strip>
            <DockTab $w={45}>Diseño</DockTab>
            <DockTab $w={113} $on>Trayectorias y pun...</DockTab>
            <DockTab $w={57}>Etiquetas</DockTab>
            <StripTools><Menu3 /><Cross /></StripTools>
          </Strip>
          <TreeTools>
            <Icon w={7} h={9} c="#1d86c8" sw={1.400}><path d="M1 4 3.500 1.500 6 4M1 8 3.500 5.500 6 8" /></Icon>
            <CollapseLink>Contraer todo</CollapseLink>
            <Search>Buscar</Search>
          </TreeTools>
          <Tree>
            <TreeRow $indent={8}>
              <Icon w={12} h={16}><path d="M.5.500H8L11.500 4V15.500H.5Z" /><circle cx="6" cy="8.500" r="2.500" /><circle cx="6" cy="8.500" r=".7" /></Icon>
              <Glyph $ml={0} $mr={7} />Movimientos*
            </TreeRow>
            <TreeRow $indent={8}><Caret><Closed /></Caret><Glyph $ml={6} $mr={5}><Folder /></Glyph>Elementos de estación</TreeRow>
            <TreeRow $indent={6}><Caret><Open /></Caret><Glyph $ml={9} $mr={5}><Cabinet s={14} /></Glyph>Controlador1</TreeRow>
            <TreeRow $indent={22} $bold><Caret><Open /></Caret>
              <Glyph $ml={8} $mr={6}><Icon w={16} h={12} sw={1.200}><path d="M.6.600H15.400V11.400H.6ZM0 2H16" /><path d="M2.500 9.500V7.500L4.500 5.500 6.500 6.500 8 4.500 9.500 6.500 12 5.500 13.500 8V9.500H11L10 8.500H6L5 9.500Z" fill="#333" stroke="none" /></Icon></Glyph>T_ROB1
            </TreeRow>
            <TreeRow $indent={38}><Caret><Open /></Caret><Glyph $ml={8} $mr={5}><Folder /></Glyph>Datos de herramienta</TreeRow>
            <TreeRow $indent={72} $bold><Gripper /><Glyph $ml={0} $mr={7} />MyTool</TreeRow>
            <TreeRow $indent={72}><Gripper /><Glyph $ml={0} $mr={6} />tool0</TreeRow>
            <TreeRow $indent={38}><Caret><Open /></Caret><Glyph $ml={8} $mr={5}><Folder /></Glyph>&amp;Objetos de trabajo y puntos</TreeRow>
            <TreeRow $indent={52}><Caret><Open /></Caret><Picked><Axes />Objeto_1</Picked></TreeRow>
            <TreeRow $indent={70}><Caret><Open /></Caret><Glyph $ml={7} $mr={5}><Axes /></Glyph></TreeRow>
            <TreeRow $indent={56} $gap={76}><Caret><Closed /></Caret><Glyph $ml={5} $mr={6}><Axes /></Glyph>Objeto_2</TreeRow>
            <TreeRow $indent={56} $bold><Caret><Closed /></Caret><Glyph $ml={5} $mr={6}><Axes /></Glyph>wobj0</TreeRow>
            <TreeRow $indent={40}><Caret><Closed /></Caret><Glyph $ml={6} $mr={5}><Folder /></Glyph>Trayectorias</TreeRow>
          </Tree>
        </SidePanel>

        <Center>
          <Strip><ViewTab>Movimientos:Ver1<Cross /></ViewTab></Strip>
          <Viewport><Scene /></Viewport>
          <OutputHead />
          <OutputFilter>Mostrar mensajes de:<FilterCombo>Todos los mensajes<Chevron /></FilterCombo></OutputFilter>
          {log.map((t) => (
            <LogRow key={t}>
              <svg width="16" height="16" viewBox="0 0 16 16">
                <circle cx="8" cy="8" r="8" fill="#0a50ff" />
                <path d="M8 3.200V5.200M6.500 7H8.500V12" stroke="#fff" strokeWidth="1.800" fill="none" />
              </svg>
              {t}
            </LogRow>
          ))}
        </Center>
      </Dock>

      <Popup $x={95} $y={380} $w={212} $h={468}>
        {menu.map((m, k) =>
          m.t ? (
            <MenuRow key={k} $off={m.off} $hot={m.hot}>
              <MenuIcon>{m.i && <Icon w={16} c={m.off ? "#999" : "#222"}>{menuIcons[m.i]}</Icon>}</MenuIcon>
              <MenuText>{m.t}</MenuText>
              <Shortcut>{m.key}</Shortcut>
              <span />
              {m.sub && <Icon w={5} h={8} c="none"><path d="M0 0 5 4 0 8Z" fill={m.off ? "#999" : "#333"} /></Icon>}
            </MenuRow>
          ) : (
            <Rule key={k} />
          )
        )}
      </Popup>

      <Popup $x={306} $y={462} $w={224} $h={268}>
        <Filter>Filtro</Filter>
        {targets.map((t) => <SubRow key={t} $tight={t.startsWith("IRB")}>{t}</SubRow>)}
      </Popup>

      <Tip>Pieza_1</Tip>
      <Annotations />
    </Window>
  );
}
